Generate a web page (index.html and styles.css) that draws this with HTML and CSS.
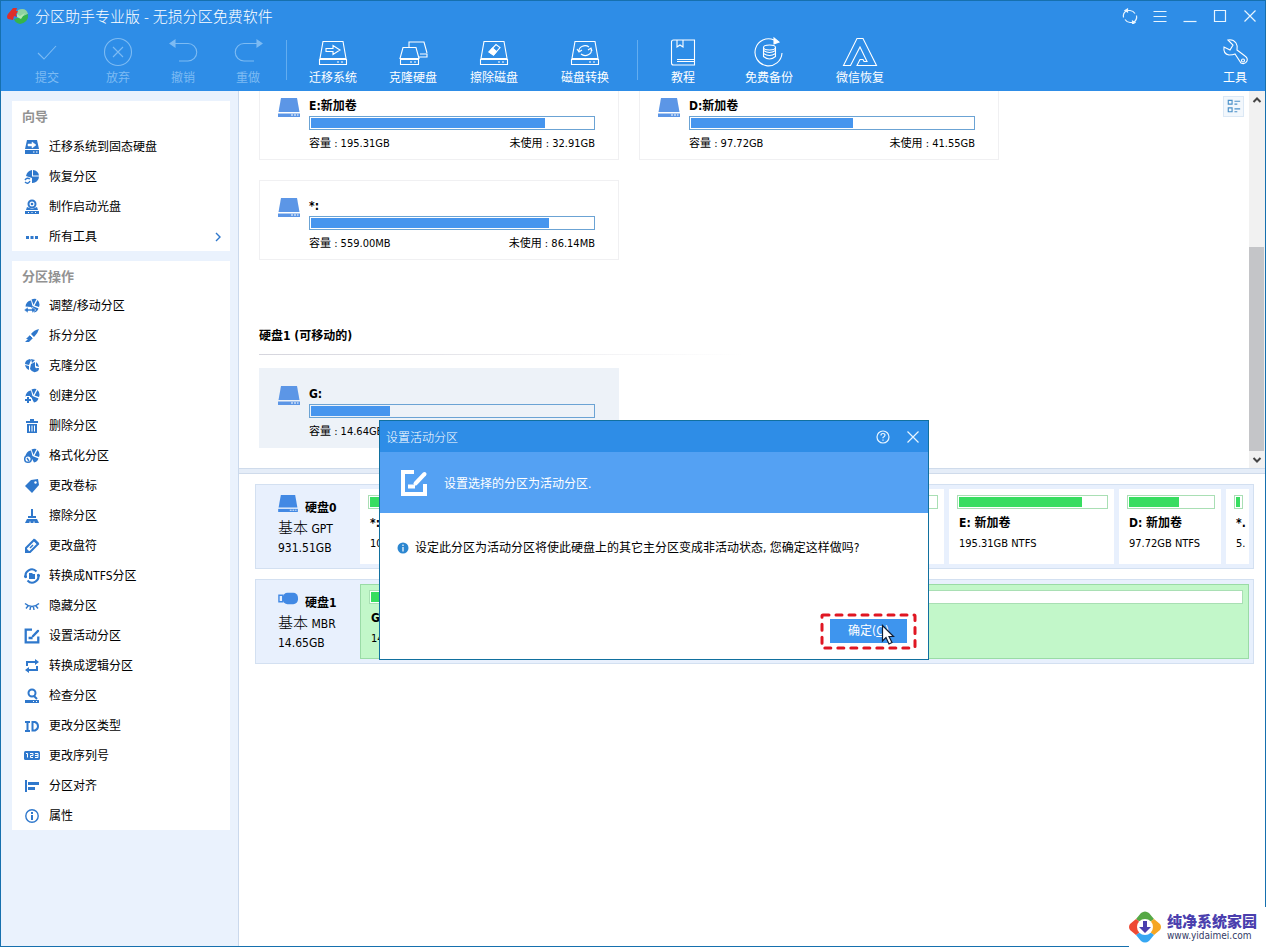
FILE: index.html
```html
<!DOCTYPE html>
<html lang="zh-CN">
<head>
<meta charset="utf-8">
<title>分区助手专业版 - 无损分区免费软件</title>
<link rel="stylesheet" href="styles.css">
</head>
<body>
<svg class="defs" aria-hidden="true">
  <symbol id="drive" viewBox="0 0 22 19"><path d="M3 0h16l2.500 14H.5z"/><path d="M0 15.500h22V19H0z"/><path d="M13 17h2M16 17h2M19 17h1.500" stroke="#fff" stroke-width="1"/></symbol>
  <symbol id="tray" viewBox="0 0 30 30"><path d="M5 4.500h20l3 17H2zM1.500 22.500h27v5h-27zM19 25h2M23 25h2"/></symbol>
  <symbol id="pie" viewBox="0 0 16 16"><path d="M7 2.500A6 6 0 0 0 1.500 8.500L7 9l3 5.500a6 6 0 0 0 4.500-4L8.500 8z"/><path d="M7.500 1.500a6.500 6.500 0 0 1 5-.5L9.500 7zM13.500 2a6.500 6.500 0 0 1 1.500 7L10.500 7.500z"/></symbol>
  <symbol id="edit" viewBox="0 0 28 28"><path d="M14 3H3v22h22V15M8 17.500h7" fill="none" stroke="currentColor" stroke-width="4"/><path d="M15.500 14.500L24.500 5" fill="none" stroke="currentColor" stroke-width="4" stroke-linecap="round"/></symbol>
</svg>
<div class="window">
  <header class="header">
    <div class="titlebar">
      <svg class="logo" viewBox="0 0 22 18"><path d="M1 7l5-6h4l-1 3h3L9 7l1 3-3-1-1 4-5-1q-2-2 0-5z" fill="#dd2f2a"/><path d="M11 3q8-3 10 4l-6 3-5-2z" fill="#8fd2a0"/><path d="M21 7q1 8-8 10-5-1-6-5l7-2z" fill="#35b54a"/><path d="M10 7l3 2 5-3-4 6-4-2z" fill="#b5e8b0"/></svg>
      <h1 class="title">分区助手专业版 - 无损分区免费软件</h1>
      <div class="win-buttons">
        <button aria-label="刷新"><svg viewBox="0 0 16 16"><path d="M1.500 9.500A6.500 6.500 0 0 1 4 3M5 2.500h3a6.500 6.500 0 0 1 5 3M14.500 7.500A6.500 6.500 0 0 1 12 14M11 14.500H8a6.500 6.500 0 0 1-5-3"/><path d="M5.500 1v3L3 2.500zM10.500 13v3l2.500-1.500z" fill="#e8f5ff"/></svg></button>
        <button aria-label="菜单"><svg viewBox="0 0 16 16"><path d="M1.500 3.500h13M1.500 8.500h13M1.500 13.500h13"/></svg></button>
        <button aria-label="最小化"><svg viewBox="0 0 16 16"><path d="M1.500 13.500h13"/></svg></button>
        <button aria-label="最大化"><svg viewBox="0 0 16 16"><path d="M2.500 2.500h11v11h-11z"/></svg></button>
        <button aria-label="关闭"><svg viewBox="0 0 16 16"><path d="M2.500 2.500l11 11M13.500 2.500l-11 11"/></svg></button>
      </div>
    </div>
    <nav class="toolbar">
      <button class="tool" disabled><svg viewBox="0 0 30 30"><path d="M6 16l6 6L24 9"/></svg>提交</button>
      <button class="tool" disabled><svg viewBox="0 0 30 30"><circle cx="15" cy="15" r="13.500"/><path d="M10 10l10 10M20 10L10 20"/></svg>放弃</button>
      <button class="tool" disabled><svg viewBox="0 0 30 30"><path d="M3 6.500h17a8.700 8.700 0 0 1 0 17.500h-9"/><path d="M7 3v7L2 6.500z" class="solid"/></svg>撤销</button>
      <button class="tool" disabled><svg viewBox="0 0 30 30"><path d="M27 6.500H11A8.700 8.700 0 0 0 11 24h10"/><path d="M24 3v7l5-3.500z" class="solid"/></svg>重做</button>
      <span class="sep"></span>
      <button class="tool"><svg viewBox="0 0 30 30"><use href="#tray"/><path d="M8 11.500h7v-3l7 4.500-7 4.500v-3H8z"/></svg>迁移系统</button>
      <button class="tool"><svg viewBox="0 0 30 30"><path d="M5 10.500h13l3 11H2zM2.500 22.500h18v5h-18zM12 25h2M16 25h2M11 10V5h15l3 11M21 20h8v-3h-7"/></svg>克隆硬盘</button>
      <button class="tool"><svg viewBox="0 0 30 30"><use href="#tray"/><path d="M10 15l7-7.500 4 3-6.500 7.500z"/><path d="M10 15l3.500-4 4 3.500-3 3.500z" class="solid"/></svg>擦除磁盘</button>
      <button class="tool"><svg viewBox="0 0 30 30"><use href="#tray"/><path d="M9 14a6 5 0 0 1 10-4M21 12a6 5 0 0 1-10 5M7 12l2 3 3-2M18 13l3-2 1 3"/></svg>磁盘转换</button>
      <span class="sep"></span>
      <button class="tool"><svg viewBox="0 0 30 30"><path d="M3.500 5q0-2 2-2h21v25h-21q-2 0-2-2zM9 3v7l3-2 3 2V3M26 22.500H9M9 24.500h17"/></svg>教程</button>
      <button class="tool"><svg viewBox="0 0 30 30"><path d="M20 3A13.500 13.500 0 1 0 28 16"/><path d="M20 1l5 4-5 2z" class="solid"/><ellipse cx="15.500" cy="10.500" rx="6" ry="2.500"/><path d="M9.500 10.500v9q6 5 12 0v-9M9.500 13.500q6 4 12 0M9.500 16.500q6 4 12 0"/></svg>免费备份</button>
      <button class="tool"><svg class="wide" viewBox="0 0 36 30"><path d="M1.500 28.500L15 1.500h6l13.500 27H15l3-6h3l1 2h3L18 10 8.500 28.500z"/></svg>微信恢复</button>
      <button class="tool end"><svg viewBox="0 0 30 30"><path d="M8 3l5 5-3 5-6-3q-1 7 5 8 4 0 6-1l6 9q4 2 6-2 1-3-2-5l-8-6q1-4-1-7-3-4-8-3z"/><circle cx="23" cy="23.500" r="1.500"/></svg>工具</button>
    </nav>
  </header>

  <div class="body">
    <aside class="sidebar">
      <section class="panel">
        <h2>向导</h2>
        <a href="#"><svg viewBox="0 0 16 16"><path d="M3 1h10l2 9H1zM1 11h14v4H1z"/><path d="M4 5h4V3l4 3-4 3V7H4z" class="w"/><path d="M9 13h1.500M12 13h1.500" class="ws"/></svg>迁移系统到固态硬盘</a>
        <a href="#"><svg viewBox="0 0 16 16"><path d="M9 1a7 6.500 0 0 1 6 5.500H9zM8 1v6.500h7A6.500 6.500 0 0 1 8 14V9L2 7Q3 2 8 1z"/><path d="M1 11q2-3 5-1M6 12q-2 4-5 1" class="thin"/></svg>恢复分区</a>
        <a href="#"><svg viewBox="0 0 16 16"><circle cx="8" cy="5" r="3.500" class="l"/><circle cx="8" cy="5" r="1.300"/><path d="M3 8l5 2 5-2 1 3H2zM1 12h14v3H1z"/><path d="M4 13.500h1M7.500 13.500h1M11 13.500h1" class="ws"/></svg>制作启动光盘</a>
        <a href="#"><svg viewBox="0 0 16 16"><path d="M2 7h3v3H2zM6.500 7h3v3h-3zM11 7h3v3h-3z"/></svg>所有工具<svg class="more" viewBox="0 0 8 12"><path d="M2 2l4 4-4 4" class="thin"/></svg></a>
      </section>
      <section class="panel">
        <h2>分区操作</h2>
        <a href="#"><svg viewBox="0 0 16 16"><use href="#pie"/><path d="M0 12l4-3v2h4V9l4 3-4 3v-2H4v2z" stroke="#fff" stroke-width=".5"/></svg>调整/移动分区</a>
        <a href="#"><svg viewBox="0 0 16 16"><path d="M15 1q-5 1-8 5l3 3q4-4 5-8zM6 7l3 3-4 4H1l3-3H2z"/><path d="M5 6l5 5" class="ws"/></svg>拆分分区</a>
        <a href="#"><svg viewBox="0 0 16 16"><path d="M6 1Q1 2 1 6l4 1 2-5zM7 1l4 1-3 3zM5 8L1 7q1 4 4 5z"/><path d="M7 6l4-2v5l3 4q-5 3-8-2zM12 4q3 2 3 5l-3-1zM15 10q0 2-1 3l-2-3z"/></svg>克隆分区</a>
        <a href="#"><svg viewBox="0 0 16 16"><use href="#pie"/><path d="M4 8v8M0 12h8" stroke="#fff" stroke-width="4"/><path d="M4 9v6M1 12h6" class="l"/></svg>创建分区</a>
        <a href="#"><svg viewBox="0 0 16 16"><path d="M2 3h4V1h4v2h4v2H2zM3 6h10v9H3z"/><path d="M5.500 7.500v6M8 7.500v6M10.500 7.500v6" class="ws"/></svg>删除分区</a>
        <a href="#"><svg viewBox="0 0 16 16"><use href="#pie"/><circle cx="4" cy="11" r="3.300" fill="#fff" stroke="currentColor" stroke-width="1.500"/><path d="M3 10l2 3" class="thin"/></svg>格式化分区</a>
        <a href="#"><svg viewBox="0 0 16 16"><path d="M1 8l6-6 7-1 1 6-7 8z"/><circle cx="11.500" cy="4.500" r="1.200" fill="#fff"/></svg>更改卷标</a>
        <a href="#"><svg viewBox="0 0 16 16"><path d="M7 1h2v7h3v2H4V8h3zM3 11h10l2 4H1z"/><path d="M6 13.500V15M10 13.500V15" class="ws"/></svg>擦除分区</a>
        <a href="#"><svg viewBox="0 0 16 16"><path d="M2 10l8-8 4 4-8 8H2z" class="l"/><path d="M9 2l5 5 1-2-4-4zM2 10l4 4H1z"/><path d="M6 10l3-3" class="thin"/></svg>更改盘符</a>
        <a href="#"><svg viewBox="0 0 16 16"><path d="M2 10A6.300 6.300 0 0 1 12.500 3.500M14 6A6.300 6.300 0 0 1 3.500 12.500M0 8.500h3M13 7.500h3" class="l"/><path d="M5 5h3l1 1h2v5H5z"/></svg>转换成NTFS分区</a>
        <a href="#"><svg viewBox="0 0 16 16"><path d="M1 5.500q7 6 14 0M4 8l-2 2.500M6.500 9L6 12M9.500 9l.5 3M12 8l2 2.500" class="thin"/></svg>隐藏分区</a>
        <a href="#"><svg viewBox="0 0 28 28"><use href="#edit"/></svg>设置活动分区</a>
        <a href="#"><svg viewBox="0 0 16 16"><path d="M3 8V4h9M13 8v4H4" class="l"/><path d="M11 1l4 3-4 3zM5 9l-4 3 4 3z"/></svg>转换成逻辑分区</a>
        <a href="#"><svg viewBox="0 0 16 16"><circle cx="8" cy="5" r="3.500" class="l"/><path d="M10 8l3 3" class="l"/><path d="M1 12h14v3H1z"/><path d="M9 13.500h1M12 13.500h1" class="ws"/></svg>检查分区</a>
        <a href="#"><svg viewBox="0 0 16 16"><path d="M1 4h5M3.500 4v9M1 13h5M8.500 4v8.500h2.500q3-1 3-4.200T11 4z" class="l"/></svg>更改分区类型</a>
        <a href="#"><svg viewBox="0 0 16 16"><rect x="0" y="3" width="16" height="9" rx="1.500"/><path d="M2 5.500h1.500v4M6 5.500h3v2H6.500v2H9M11 5.500h3v4h-3M11 7.500h3" class="ws"/></svg>更改序列号</a>
        <a href="#"><svg viewBox="0 0 16 16"><path d="M1 2h2v12H1zM4 4h11v3H4zM4 9h7v3H4z"/></svg>分区对齐</a>
        <a href="#"><svg viewBox="0 0 16 16"><circle cx="8" cy="8" r="6.200" class="thin"/><path d="M7 7h2v5H7zM7 4h2v2H7z"/></svg>属性</a>
      </section>
    </aside>

    <main class="main">
      <div class="upper">
        <div class="volumes">
          <div class="cards">
            <article class="card"><svg class="drive"><use href="#drive"/></svg><div class="info"><b>E:新加卷</b><div class="bar"><i style="width:83%"></i></div><p><span>容量 : 195.31GB</span><span>未使用 : 32.91GB</span></p></div></article>
            <article class="card"><svg class="drive"><use href="#drive"/></svg><div class="info"><b>D:新加卷</b><div class="bar"><i style="width:57.500%"></i></div><p><span>容量 : 97.72GB</span><span>未使用 : 41.55GB</span></p></div></article>
            <article class="card"><svg class="drive"><use href="#drive"/></svg><div class="info"><b>*:</b><div class="bar"><i style="width:84.500%"></i></div><p><span>容量 : 559.00MB</span><span>未使用 : 86.14MB</span></p></div></article>
          </div>
          <h2 class="disk-title">硬盘1 (可移动的)</h2>
          <div class="cards">
            <article class="card selected"><svg class="drive"><use href="#drive"/></svg><div class="info"><b>G:</b><div class="bar"><i style="width:28%"></i></div><p><span>容量 : 14.64GB</span></p></div></article>
          </div>
        </div>
        <button class="view" aria-label="视图"><svg viewBox="0 0 20 20"><path d="M4.500 3.500h4v4h-4zM4.500 11.500h4v4h-4zM11 4.500h6M11 7.500h3M11 12.500h6M11 15.500h3"/></svg></button>
        <div class="scrollbar">
          <button aria-label="向上"><svg viewBox="0 0 10 10"><path d="M1.500 7L5 3.500 8.500 7"/></svg></button>
          <span class="thumb"></span>
          <button aria-label="向下"><svg viewBox="0 0 10 10"><path d="M1.500 3L5 6.500 8.500 3"/></svg></button>
        </div>
      </div>
      <div class="splitter"></div>
      <div class="map">
        <section class="disk">
          <div class="disk-info"><div class="disk-name"><svg><use href="#drive"/></svg><b>硬盘0</b></div><p><span class="kind">基本</span> GPT</p><p>931.51GB</p></div>
          <div class="parts disk0">
            <div class="part"><div class="gauge"><i style="width:60%"></i></div><b>*:</b><span>100.00MB</span></div>
            <div class="part"><div class="gauge"></div></div>
            <div class="part"><div class="gauge"><i style="width:84%"></i></div><b>E: 新加卷</b><span>195.31GB NTFS</span></div>
            <div class="part"><div class="gauge"><i style="width:60%"></i></div><b>D: 新加卷</b><span>97.72GB NTFS</span></div>
            <div class="part"><div class="gauge"><i style="width:86%"></i></div><b>*.</b><span>5.</span></div>
          </div>
        </section>
        <section class="disk">
          <div class="disk-info"><div class="disk-name"><svg viewBox="0 0 21 14"><rect x="5" y="1" width="16" height="12" rx="5"/><path d="M1 3.500h4v7H1z" fill="none" stroke="currentColor" stroke-width="1.500"/></svg><b>硬盘1</b></div><p><span class="kind">基本</span> MBR</p><p>14.65GB</p></div>
          <div class="parts">
            <div class="part active"><div class="gauge"><i style="width:28%"></i></div><b>G:</b><span>14.65GB</span></div>
          </div>
        </section>
      </div>
    </main>
  </div>
</div>

<div class="dialog" role="dialog" aria-labelledby="dlg-title">
  <div class="dialog-title"><h2 id="dlg-title">设置活动分区</h2>
    <button aria-label="帮助"><svg viewBox="0 0 16 16"><circle cx="8" cy="8" r="6"/><path d="M6 6.500q0-2 2-2t2 1.700Q10 7.200 8 8.500v.8M8 10.500v1.200"/></svg></button>
    <button aria-label="关闭"><svg viewBox="0 0 16 16"><path d="M2.500 2.500l11 11M13.500 2.500l-11 11"/></svg></button>
  </div>
  <div class="banner"><svg><use href="#edit"/></svg><p>设置选择的分区为活动分区.</p></div>
  <div class="message"><svg viewBox="0 0 12 12"><circle cx="6" cy="6" r="5.500" fill="#2b86d0"/><path d="M6 2.500v1.500M6 5v4.500" stroke="#fff" stroke-width="1.200"/></svg><p>设定此分区为活动分区将使此硬盘上的其它主分区变成非活动状态, 您确定这样做吗?</p></div>
  <div class="actions">
    <div class="highlight">
      <svg class="dash"><rect x="2" y="2" width="93" height="33" rx="1"/></svg>
      <button class="ok">确定(<u>O</u>)</button>
      <svg class="cursor" viewBox="0 0 14 22"><path d="M1.500 1.500v15.500l3.500-3.500 3 6.500 3-1.500-3-6h4.500z"/></svg>
    </div>
  </div>
</div>

<div class="watermark">
  <svg viewBox="0 0 32 32"><path d="M7 8l5-6q4-3 8 0l5 6-4 3q-5-4-10 0z" fill="#56a845"/><path d="M25 8l6 5q2 3 0 6l-6 5-4-3q3-5 0-10z" fill="#f5a623"/><path d="M25 24l-5 6q-4 3-8 0l-5-6 4-3q5 4 10 0z" fill="#36a7f2"/><path d="M7 8l-6 5q-2 3 0 6l6 5 4-3q-3-5 0-10z" fill="#ee4a34"/><circle cx="16" cy="16" r="8" fill="#fff"/><path d="M14 10h4v6h4l-6 6-6-6h4z" fill="#4a3fae"/></svg>
  <div><strong>纯净系统家园</strong><span>www.yidaimei.com</span></div>
</div>
</body>
</html>
```
FILE: styles.css
```css
* { box-sizing: border-box; margin: 0; padding: 0; }
body {
  position: relative;
  min-height: 100vh;
  font: 12px/16px "DejaVu Sans Condensed", "Noto Sans CJK SC", sans-serif;
  color: #000;
  background: #fff;
}
button { border: 0; background: none; font: inherit; color: inherit; }
a { color: inherit; text-decoration: none; }
svg { display: block; flex: none; fill: currentColor; }
.defs { position: absolute; width: 0; height: 0; }

.window { display: flex; flex-direction: column; min-height: 100vh; border: 1px solid #1670ae; }

.header { background: #2e8de7; color: #fff; }
.titlebar { display: flex; align-items: center; height: 30px; padding: 0 7px 0 6px; }
.logo { width: 22px; height: 18px; }
.title { flex: 1; margin-left: 6px; font: 15px/20px "Noto Sans", "Noto Sans CJK SC", sans-serif; font-weight: 300; }
.win-buttons { display: flex; gap: 14px; }
.win-buttons svg, .dialog-title svg { width: 16px; height: 16px; fill: none; stroke: #e8f5ff; stroke-width: 1.2; }

.toolbar {
  display: grid;
  grid-template-columns: 66px 76px 54px 76px 1px 92px 68px 94px 88px 17px 74px 98px 84px 1fr;
  height: 60px;
  padding: 0 15px 0 13px;
}
.tool { display: flex; flex-direction: column; align-items: center; gap: 3px; padding-top: 6px; white-space: nowrap; }
.tool svg { width: 30px; height: 30px; fill: none; stroke: currentColor; stroke-width: 1.1; }
.tool svg.wide { width: 36px; }
.tool .solid { fill: currentColor; }
.tool:disabled { color: #7dbbf3; }
.end { justify-self: end; }
.sep { width: 1px; height: 40px; margin-top: 9px; background: #63adf0; justify-self: center; }

.body { flex: 1; display: flex; }
.sidebar { flex: none; width: 238px; padding: 10px 8px 10px 11px; background: #eaf2fd; border-right: 1px solid #cbd9ec; }
.panel { background: #fff; }
.panel + .panel { margin-top: 10px; }
.panel h2 { padding: 2px 10px 0; font-size: 13px; line-height: 28px; color: #929292; }
.panel + .panel h2 { line-height: 27px; }
.panel a { display: flex; align-items: center; gap: 9px; height: 30px; padding: 1px 8px 0 12px; }
.panel a svg { width: 16px; height: 16px; color: #2f78cc; }
.panel a .more { width: 8px; height: 12px; margin-left: auto; }
.panel .w { fill: #fff; stroke: #fff; stroke-width: .5; }
.panel .ws { fill: none; stroke: #fff; stroke-width: 1; }
.panel .l { fill: none; stroke: currentColor; stroke-width: 2; }
.panel .thin { fill: none; stroke: currentColor; stroke-width: 1.4; }

.main { flex: 1; min-width: 0; }
.upper { position: relative; display: flex; height: 377px; }
.volumes { flex: 1; padding: 0 20px; overflow: hidden; }
.cards { display: flex; flex-wrap: wrap; gap: 20px; max-width: 780px; }
.cards:first-child { margin-top: -11px; }
.card { display: flex; gap: 9px; width: 360px; height: 80px; padding: 17px 23px 0 18px; border: 1px solid #f0f0f2; }
.card.selected { background: #edf2f8; border-color: #edf2f8; }
.drive { width: 22px; height: 19px; color: #5c96e6; }
.info { flex: 1; }
.info b { display: block; font-size: 12px; }
.bar { height: 14px; margin: 2px 0 6px; padding: 1px; border: 1px solid #6ba3d4; }
.bar i { display: block; height: 100%; background: #4695ee; }
.info p { display: flex; justify-content: space-between; font-size: 11px; }
.disk-title { margin-top: 68px; padding-bottom: 10px; font-size: 12px; border-bottom: 1px solid; border-image: linear-gradient(90deg, #d5d5dd, #fff 50%) 1; }
.disk-title + .cards { margin-top: 13px; }
.view { position: absolute; top: 5px; right: 21px; width: 21px; height: 21px; background: #f2f7fc; border: 1px solid #dbe8f5; }
.view svg { fill: none; stroke: #4a90c8; stroke-width: 1.2; }
.scrollbar { display: grid; grid-template-rows: 17px 1fr 17px; width: 16px; padding-right: 1px; background: #f1f1f1; }
.scrollbar button { display: grid; place-items: center; }
.scrollbar svg { width: 10px; height: 10px; fill: none; stroke: #444; stroke-width: 2; }
.thumb { align-self: end; height: 204px; background: #c4c5c8; }
.splitter { height: 6px; background: #e5edf8; border: solid #cfdbeb; border-width: 1px 0; }

.map { display: grid; gap: 10px; padding: 10px 11px 0 16px; }
.disk { display: flex; height: 85px; padding: 4px; background: #e8f0fd; border: 1px solid #d3e0f1; }
.disk-info { flex: none; width: 100px; padding: 7px 0 0 18px; line-height: 19px; }
.disk-name { display: flex; align-items: center; gap: 7px; height: 23px; }
.disk-name svg { width: 20px; height: 17px; margin-bottom: 8px; color: #4289e4; }
.disk-name b { padding-top: 2px; }
.kind { font-size: 15px; font-weight: 300; }
.parts { flex: 1; display: grid; gap: 5px; }
.disk0 { grid-template-columns: 160px 1fr 165px 102px 23px; }
.part { display: flex; flex-direction: column; min-width: 0; padding: 6px 6px 0 8px; background: #fff; font-size: 11px; overflow: hidden; white-space: nowrap; }
.part b { margin: 6px 0 5px 2px; font-size: 12px; }
.part span { margin-left: 2px; }
.part.active { background: #c2f7c9; border: 1px solid #9adba6; padding: 5px 5px 0 8px; }
.gauge { flex: none; height: 14px; padding: 1px; background: #fff; border: 1px solid #a9dfb4; }
.gauge i { display: block; height: 100%; background: #37dd60; }

.dialog { position: absolute; left: 379px; top: 420px; width: 550px; height: 240px; background: #fff; border: 1px solid #11709f; }
.dialog-title { display: flex; align-items: center; gap: 14px; height: 31px; padding: 0 7px 0 6px; background: #2e8de7; color: #fff; }
.dialog-title h2 { flex: 1; padding-top: 2px; font-size: 12px; font-weight: 300; }
.banner { display: flex; align-items: center; gap: 16px; height: 61px; padding-left: 20px; background: #54a1f3; color: #fff; }
.banner p { padding-top: 2px; }
.banner svg { width: 28px; height: 28px; }
.message { display: flex; align-items: center; gap: 6px; padding: 26px 17px 0; white-space: nowrap; }
.message p { padding-top: 1px; }
.message svg { width: 12px; height: 12px; }
.actions { display: flex; justify-content: flex-end; padding: 57px 11px 0; }
.highlight { position: relative; width: 97px; height: 37px; padding: 6px 10px; }
.dash { position: absolute; inset: 0; width: 97px; height: 37px; fill: none; stroke: #e01622; stroke-width: 3; stroke-dasharray: 6 7; stroke-linecap: round; }
.ok { width: 77px; height: 24px; background: #3e95ee; color: #fff; }
.cursor { position: absolute; left: 61px; top: 11px; width: 14px; height: 22px; fill: #fff; stroke: #111d33; stroke-width: 1.2; }

.watermark { position: absolute; right: 0; bottom: 0; display: flex; align-items: center; gap: 6px; height: 40px; padding-right: 9px; background: #fff; }
.watermark svg { width: 32px; height: 32px; }
.watermark strong { display: block; font-size: 15px; line-height: 18px; font-weight: 900; color: #4b3fae; }
.watermark span { display: block; font-size: 10px; line-height: 10px; color: #333a66; }
```
